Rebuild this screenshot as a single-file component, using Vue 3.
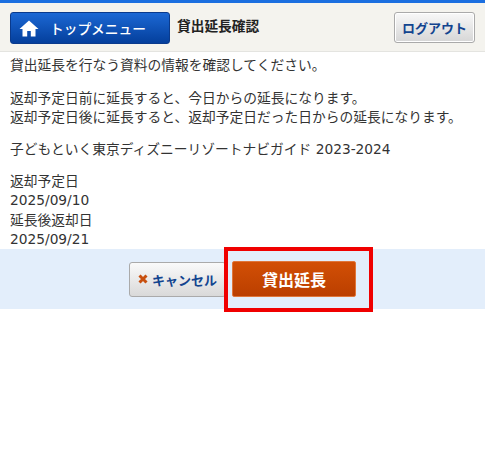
<template>
  <div class="page">
    <header class="top-bar">
      <a class="home-btn">
        <svg class="home-icon" viewBox="0 0 20 17" width="20" height="17">
          <path d="M10 0.5 L19.5 9 L16.5 9 L16.5 16.5 L11.8 16.5 L11.8 11 L8.2 11 L8.2 16.5 L3.5 16.5 L3.5 9 L0.5 9 Z" fill="#fff" />
        </svg>
        <span>トップメニュー</span>
      </a>
      <h1 class="title">貸出延長確認</h1>
      <a class="logout-btn">ログアウト</a>
    </header>

    <main class="content">
      <p>貸出延長を行なう資料の情報を確認してください。</p>
      <p>返却予定日前に延長すると、今日からの延長になります。<br />返却予定日後に延長すると、返却予定日だった日からの延長になります。</p>
      <p>{{ book }}</p>
      <dl class="dates">
        <template v-for="d in dates" :key="d.label">
          <dt>{{ d.label }}</dt>
          <dd>{{ d.value }}</dd>
        </template>
      </dl>
    </main>

    <div class="actions">
      <a class="cancel-btn">
        <svg viewBox="0 0 10 10" width="10" height="10">
          <path d="M1.5 1.5 L8.5 8.5 M8.5 1.5 L1.5 8.5" stroke="#c8500f" stroke-width="3" fill="none" />
        </svg>
        <span>キャンセル</span>
      </a>
      <a class="extend-btn">貸出延長</a>
      <div class="highlight"></div>
    </div>
  </div>
</template>

<script setup>
const book = '子どもといく東京ディズニーリゾートナビガイド 2023-2024'
const dates = [
  { label: '返却予定日', value: '2025/09/10' },
  { label: '延長後返却日', value: '2025/09/21' },
]
</script>

<style>
body {
  background: #fff;
}
</style>

<style scoped>
.page {
  width: 485px;
  min-height: 450px;
  font-family: "DejaVu Sans", "Noto Sans CJK JP", sans-serif;
  font-size: 13.75px;
  color: #333;
}

.top-bar {
  display: flex;
  align-items: flex-start;
  height: 52px;
  box-sizing: border-box;
  border-top: 3px solid #1b6fe0;
  border-bottom: 1px solid #e4e4e0;
  background: #f4f3ee;
  padding: 9px 10px 0;
}

.home-btn {
  display: flex;
  align-items: center;
  width: 160px;
  height: 32px;
  box-sizing: border-box;
  padding-left: 8px;
  gap: 11px;
  border: 1px solid #0a3a8c;
  border-radius: 3px;
  background: linear-gradient(#1c68d4, #043f9c);
  color: #fff;
  font-size: 13.7px;
  font-weight: 500;
}

.title {
  margin: 0 0 0 7px;
  flex: 1;
  font-size: 13.7px;
  font-weight: 700;
  line-height: 29px;
  color: #222;
}

.logout-btn {
  display: flex;
  align-items: center;
  justify-content: center;
  width: 81px;
  height: 31px;
  box-sizing: border-box;
  border: 1px solid #aaa;
  border-radius: 3px;
  background: linear-gradient(#f8f8f8, #d6d6d6);
  color: #12448f;
  font-size: 13px;
  font-weight: 700;
  box-shadow: inset 0 0 0 1px #fff;
}

.content {
  padding: 4.4px 10px 0;
  line-height: 19.2px;
}

.content p {
  margin: 0 0 13px;
}

.dates {
  margin: 0;
}

.dates dd {
  margin: 0;
}

.actions {
  position: relative;
  display: flex;
  justify-content: center;
  align-items: center;
  gap: 6px;
  height: 60px;
  background: #e3eefb;
}

.cancel-btn {
  display: flex;
  align-items: center;
  justify-content: center;
  gap: 4px;
  width: 97px;
  height: 35px;
  box-sizing: border-box;
  border: 1px solid #aaa;
  border-radius: 3px;
  background: linear-gradient(#fafafa, #d9d9d9);
  color: #12448f;
  font-weight: 700;
  font-size: 13px;
}

.extend-btn {
  display: flex;
  align-items: center;
  justify-content: center;
  width: 124px;
  height: 36px;
  box-sizing: border-box;
  border: 1px solid #e0763a;
  border-radius: 2px;
  background: linear-gradient(#d24f05, #bb3f00);
  color: #fff;
  font-weight: 700;
  font-size: 16px;
}

.highlight {
  position: absolute;
  left: 224px;
  top: -2px;
  width: 149px;
  height: 65px;
  box-sizing: border-box;
  border: 4px solid #f00000;
}
</style>
